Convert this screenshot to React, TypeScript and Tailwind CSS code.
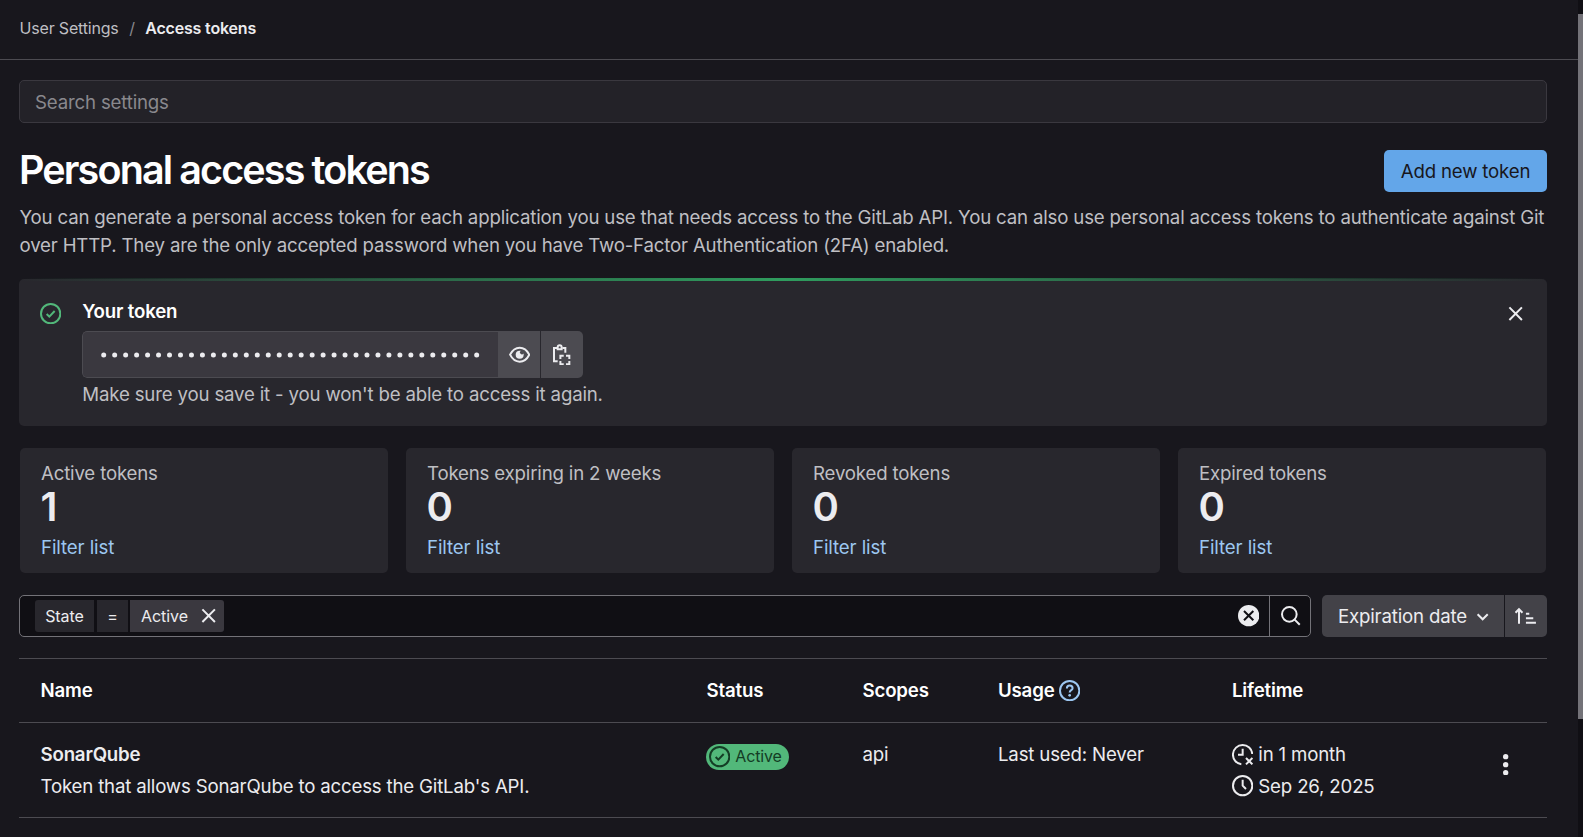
import React from "react";

type IconProps = { className?: string; size?: number; children: React.ReactNode };

const Icon = ({ className = "", size = 21.33, children }: IconProps) => (
  <svg
    viewBox="0 0 16 16"
    width={size}
    height={size}
    fill="none"
    stroke="currentColor"
    strokeWidth={1.5}
    className={"shrink-0 " + className}
  >
    {children}
  </svg>
);

const Close = () => <path d="M3.3 3.3l9.4 9.4M12.7 3.3l-9.4 9.4" />;
const CheckCircle = () => (
  <>
    <circle cx="8" cy="8" r="7.25" />
    <path d="M5 8.2l2 2 4-4.2" />
  </>
);

const stats = [
  ["Active tokens", "1"],
  ["Tokens expiring in 2 weeks", "0"],
  ["Revoked tokens", "0"],
  ["Expired tokens", "0"],
];

const columns = "grid grid-cols-[666px_156px_135.5px_234px_1fr] pl-[21.5px]";

export default function App() {
  return (
    <div className="flex h-[837px] w-full overflow-hidden bg-[#18171d] font-['Inter',sans-serif] text-[18.67px] leading-7 tracking-[-0.18px] text-[#ececef]">
      <div className="min-w-0 flex-1">
        <header className="flex h-[60px] items-center border-b border-[#4c4b51] pb-[3px] pl-[19.5px] text-[16px]">
          <span className="text-[#bfbfc3]">User Settings</span>
          <span className="px-[10.5px] text-[#89888d]">/</span>
          <span className="font-semibold">Access tokens</span>
        </header>
        <main className="pt-5 pr-[31px] pl-[19px]">
          <div className="flex h-[43px] items-center rounded-[5px] border border-[#3a383f] bg-[#232228] px-[15px] pt-[3px] text-[#89888d]">
            Search settings
          </div>
          <div className="mt-[27px] flex h-[42px] items-center justify-between">
            <h1 className="pb-[3px] text-[39.5px] leading-[42px] font-semibold tracking-[-1.87px] text-white">
              Personal access tokens
            </h1>
            <button className="h-[42px] w-[163px] rounded-[5px] bg-[#63a6e9] pt-[2px] text-[#18171d]">
              Add new token
            </button>
          </div>
          <p className="mt-[12px] w-[1535px] pl-[0.5px] text-[#bfbfc3]">
            You can generate a personal access token for each application you use that needs access to the GitLab
            API. You can also use personal access tokens to authenticate against Git over HTTP. They are the only
            accepted password when you have Two-Factor Authentication (2FA) enabled.
          </p>

          <section className="relative mt-[19px] flex h-[147px] rounded-[5px] bg-[#28272d] pl-[21px]">
            <div className="absolute -top-px right-0 left-0 h-[3px] bg-[linear-gradient(90deg,transparent,#2f9c5e_50%,transparent)]" />
            <Icon className="mt-[24px] text-[#52b87a]">
              <CheckCircle />
            </Icon>
            <div className="ml-[21px] flex-1 pt-[19px]">
              <h2 className="font-semibold text-white">Your token</h2>
              <div className="mt-[5px] flex h-[47px] w-[501px] overflow-hidden rounded-[5px]">
                <div className="flex w-[416px] items-center rounded-l-[5px] border border-r-0 border-[#4c4b51] bg-[#3a383f] pl-[18px]">
                  <svg width="380" height="6" fill="currentColor">
                    {Array.from({ length: 35 }, (_, i) => (
                      <circle key={i} cx={2.7 + i * 10.97} cy={3} r={2.5} />
                    ))}
                  </svg>
                </div>
                <button className="flex w-[42px] items-center justify-center bg-[#4c4b51]">
                  <Icon>
                    <path d="M.8 8C2.4 4.8 4.9 2.75 8 2.75S13.600 4.800 15.200 8C13.600 11.200 11.100 13.250 8 13.250S2.400 11.200 .8 8z" />
                    <path
                      d="M8 5a3 3 0 1 0 3 3c0-.3 0-.5-.1-.8A1.500 1.500 0 1 1 8.800 5.100C8.500 5 8.300 5 8 5z"
                      fill="currentColor"
                      stroke="none"
                    />
                  </Icon>
                </button>
                <button className="ml-px flex w-[42px] items-center justify-center bg-[#4c4b51] pr-[2px]">
                  <Icon>
                    <path d="M5 13H2.250V3H4.500M8.500 3H10.750V6.500" />
                    <path d="M5 4V2.500a1.500 1.500 0 0 1 3 0V4z" />
                    <path d="M7.050 11.250V8.750H9.550M11.250 8.750H13.750V11.250M13.750 12.750V15.250H11.250M9.550 15.250H7.050V12.750" />
                  </Icon>
                </button>
              </div>
              <p className="mt-[3px] text-[#bfbfc3]">
                Make sure you save it - you won't be able to access it again.
              </p>
            </div>
            <Icon className="absolute top-[24px] right-[21px] text-[#ececef]">
              <Close />
            </Icon>
          </section>

          <section className="mt-[22px] grid grid-cols-4 gap-[18px] px-px">
            {stats.map(([label, value]) => (
              <div key={label} className="h-[125px] rounded-[5px] bg-[#28272d] px-[21px] pt-[12px]">
                <div className="text-[#bfbfc3]">{label}</div>
                <div className="-ml-[0.5px] text-[40px] leading-[38px] font-semibold">{value}</div>
                <div className="mt-[8px] tracking-[-0.1px] text-[#9dc7f1]">Filter list</div>
              </div>
            ))}
          </section>

          <section className="mt-[22px] flex h-[42px]">
            <div className="flex w-[1292px] items-stretch overflow-hidden rounded-[5px] border border-[#737278] bg-[#100f14] text-[16px]">
              <div className="flex flex-1 items-center pl-[15px] leading-8 tracking-[-0.05px]">
                <span className="h-8 w-[59px] rounded-l-[3px] bg-[#28272d] text-center">State</span>
                <span className="ml-[3px] h-8 w-[31px] bg-[#28272d] text-center">=</span>
                <span className="ml-[2px] flex h-8 w-[94px] items-center rounded-r-[3px] bg-[#3a383f] pl-[11px]">
                  Active
                  <Icon className="ml-[10px]">
                    <Close />
                  </Icon>
                </span>
                <Icon className="mr-[10px] ml-auto">
                  <circle cx="8" cy="8" r="8" fill="currentColor" stroke="none" />
                  <path d="M4.500 4.500l7 7M11.500 4.500l-7 7" stroke="#100f14" />
                </Icon>
              </div>
              <div className="flex w-[41px] items-center justify-center border-l border-[#737278]">
                <Icon className="ml-px">
                  <circle cx="7" cy="7" r="5.500" />
                  <path d="M11 11l3.800 3.800" />
                </Icon>
              </div>
            </div>
            <button className="ml-[11px] flex w-[182px] items-center rounded-l-[5px] bg-[#434248] pl-[16px]">
              <span className="pt-[2px]">Expiration date</span>
              <Icon className="mt-px ml-[5px]">
                <path d="M4.200 6.200l3.800 3.800 3.800-3.800" />
              </Icon>
            </button>
            <button className="ml-px flex w-[42px] items-center justify-center rounded-r-[5px] bg-[#434248]">
              <Icon>
                <path d="M3 14V3.500M.4 5.800l2.600-2.600 2.600 2.600M8.200 6.500h2.500M8.200 9.900h5.500M8.200 13.250h7.500" />
              </Icon>
            </button>
          </section>

          <section className="mt-[21px] border-y border-[#4c4b51]">
            <div className={columns + " h-[64px] items-center border-b border-[#4c4b51] font-semibold text-white"}>
              <div>Name</div>
              <div>Status</div>
              <div>Scopes</div>
              <div className="flex items-center">
                Usage
                <Icon className="ml-[4px] text-[#9dc7f1]">
                  <circle cx="8" cy="8" r="7.250" />
                  <path d="M5.900 6.400C5.900 5 6.800 4.200 8 4.200s2.200.8 2.200 2C10.200 7.700 8 7.600 8 9.400" />
                  <circle cx="8" cy="11.500" r="1" fill="currentColor" stroke="none" />
                </Icon>
              </div>
              <div>Lifetime</div>
            </div>
            <div className={columns + " h-[94px] pt-[18px]"}>
              <div>
                <div className="font-semibold">SonarQube</div>
                <div className="mt-[4px]">Token that allows SonarQube to access the GitLab's API.</div>
              </div>
              <div>
                <span className="mt-[3px] -ml-[0.5px] flex h-[26px] w-[83px] items-center rounded-full bg-[#52b87a] pl-[3px] text-[16px] text-[#143d25]">
                  <Icon className="mr-[5px]">
                    <CheckCircle />
                  </Icon>
                  <span className="pb-[2px]">Active</span>
                </span>
              </div>
              <div>api</div>
              <div>Last used: Never</div>
              <div className="flex justify-between pr-[31px]">
                <div>
                  <div className="flex items-center">
                    <Icon className="mr-[5px]">
                      <path d="M7 15.200A7.250 7.250 0 1 1 15.200 7.500M8 3.500V8H4.500" />
                      <path d="M10.500 10.500l4.800 4.800M15.300 10.500l-4.800 4.800" />
                    </Icon>
                    in 1 month
                  </div>
                  <div className="mt-[4px] flex items-center">
                    <Icon className="mr-[5px] mb-[2px]">
                      <circle cx="8" cy="8" r="7.250" />
                      <path d="M8 3.500V8l2.500 2.500" />
                    </Icon>
                    Sep 26, 2025
                  </div>
                </div>
                <Icon className="mt-[13px]">
                  <g fill="currentColor" stroke="none">
                    <circle cx="8" cy="2" r="2" />
                    <circle cx="8" cy="8" r="2" />
                    <circle cx="8" cy="14" r="2" />
                  </g>
                </Icon>
              </div>
            </div>
          </section>
        </main>
      </div>
      <div className="w-[5px] bg-[#100f14] pt-[14px]">
        <div className="h-[705px] bg-[#737278]" />
      </div>
    </div>
  );
}
